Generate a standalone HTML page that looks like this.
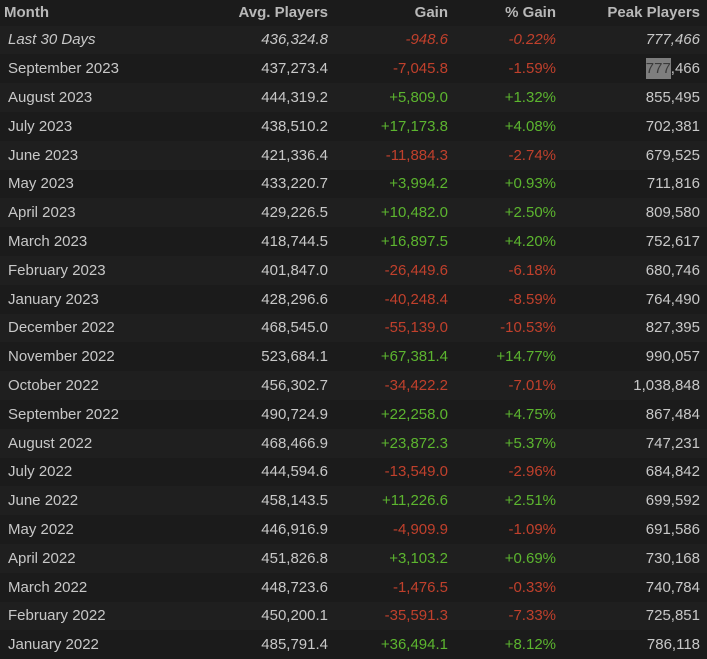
<!DOCTYPE html>
<html><head><meta charset="utf-8"><style>
body{margin:0;background:#1b1b1b;width:707px;height:659px;overflow:hidden;font-family:"Liberation Sans",Arial,sans-serif;}
table{border-collapse:collapse;width:707px;table-layout:fixed;}
td,th{padding:0;font-size:15px;white-space:nowrap;}
th{height:25.6px;color:#b8b8b8;font-weight:bold;text-align:right;background:#1b1b1b;}
td{height:28.8px;color:#c8c8c8;text-align:right;}
tr:nth-child(odd) td{background:#1f1f1f}
tr:nth-child(even) td{background:#1b1b1b}
.m{text-align:left;padding-left:8px}
th.m{padding-left:4px}
.r{color:#c0402c}.g{color:#5cb52f}
.i td{font-style:italic}
.c1{width:115px}.c2{width:213px}.c3{width:120px}.c4{width:108px}.c5{width:144px}
.hl{background:#7e7e7e;color:#3a3a3a;padding:2px 0}
</style></head><body>
<table>
<colgroup><col class="c1"><col class="c2"><col class="c3"><col class="c4"><col class="c5"><col style="width:7px"></colgroup>
<thead><tr><th class="m">Month</th><th>Avg. Players</th><th>Gain</th><th>% Gain</th><th>Peak Players</th><th></th></tr></thead>
<tbody>
<tr class="i"><td class="m">Last 30 Days</td><td>436,324.8</td><td class="r">-948.6</td><td class="r">-0.22%</td><td>777,466</td><td></td></tr>
<tr><td class="m">September 2023</td><td>437,273.4</td><td class="r">-7,045.8</td><td class="r">-1.59%</td><td><span class="hl">777</span>,466</td><td></td></tr>
<tr><td class="m">August 2023</td><td>444,319.2</td><td class="g">+5,809.0</td><td class="g">+1.32%</td><td>855,495</td><td></td></tr>
<tr><td class="m">July 2023</td><td>438,510.2</td><td class="g">+17,173.8</td><td class="g">+4.08%</td><td>702,381</td><td></td></tr>
<tr><td class="m">June 2023</td><td>421,336.4</td><td class="r">-11,884.3</td><td class="r">-2.74%</td><td>679,525</td><td></td></tr>
<tr><td class="m">May 2023</td><td>433,220.7</td><td class="g">+3,994.2</td><td class="g">+0.93%</td><td>711,816</td><td></td></tr>
<tr><td class="m">April 2023</td><td>429,226.5</td><td class="g">+10,482.0</td><td class="g">+2.50%</td><td>809,580</td><td></td></tr>
<tr><td class="m">March 2023</td><td>418,744.5</td><td class="g">+16,897.5</td><td class="g">+4.20%</td><td>752,617</td><td></td></tr>
<tr><td class="m">February 2023</td><td>401,847.0</td><td class="r">-26,449.6</td><td class="r">-6.18%</td><td>680,746</td><td></td></tr>
<tr><td class="m">January 2023</td><td>428,296.6</td><td class="r">-40,248.4</td><td class="r">-8.59%</td><td>764,490</td><td></td></tr>
<tr><td class="m">December 2022</td><td>468,545.0</td><td class="r">-55,139.0</td><td class="r">-10.53%</td><td>827,395</td><td></td></tr>
<tr><td class="m">November 2022</td><td>523,684.1</td><td class="g">+67,381.4</td><td class="g">+14.77%</td><td>990,057</td><td></td></tr>
<tr><td class="m">October 2022</td><td>456,302.7</td><td class="r">-34,422.2</td><td class="r">-7.01%</td><td>1,038,848</td><td></td></tr>
<tr><td class="m">September 2022</td><td>490,724.9</td><td class="g">+22,258.0</td><td class="g">+4.75%</td><td>867,484</td><td></td></tr>
<tr><td class="m">August 2022</td><td>468,466.9</td><td class="g">+23,872.3</td><td class="g">+5.37%</td><td>747,231</td><td></td></tr>
<tr><td class="m">July 2022</td><td>444,594.6</td><td class="r">-13,549.0</td><td class="r">-2.96%</td><td>684,842</td><td></td></tr>
<tr><td class="m">June 2022</td><td>458,143.5</td><td class="g">+11,226.6</td><td class="g">+2.51%</td><td>699,592</td><td></td></tr>
<tr><td class="m">May 2022</td><td>446,916.9</td><td class="r">-4,909.9</td><td class="r">-1.09%</td><td>691,586</td><td></td></tr>
<tr><td class="m">April 2022</td><td>451,826.8</td><td class="g">+3,103.2</td><td class="g">+0.69%</td><td>730,168</td><td></td></tr>
<tr><td class="m">March 2022</td><td>448,723.6</td><td class="r">-1,476.5</td><td class="r">-0.33%</td><td>740,784</td><td></td></tr>
<tr><td class="m">February 2022</td><td>450,200.1</td><td class="r">-35,591.3</td><td class="r">-7.33%</td><td>725,851</td><td></td></tr>
<tr><td class="m">January 2022</td><td>485,791.4</td><td class="g">+36,494.1</td><td class="g">+8.12%</td><td>786,118</td><td></td></tr>
</tbody></table>
</body></html>
